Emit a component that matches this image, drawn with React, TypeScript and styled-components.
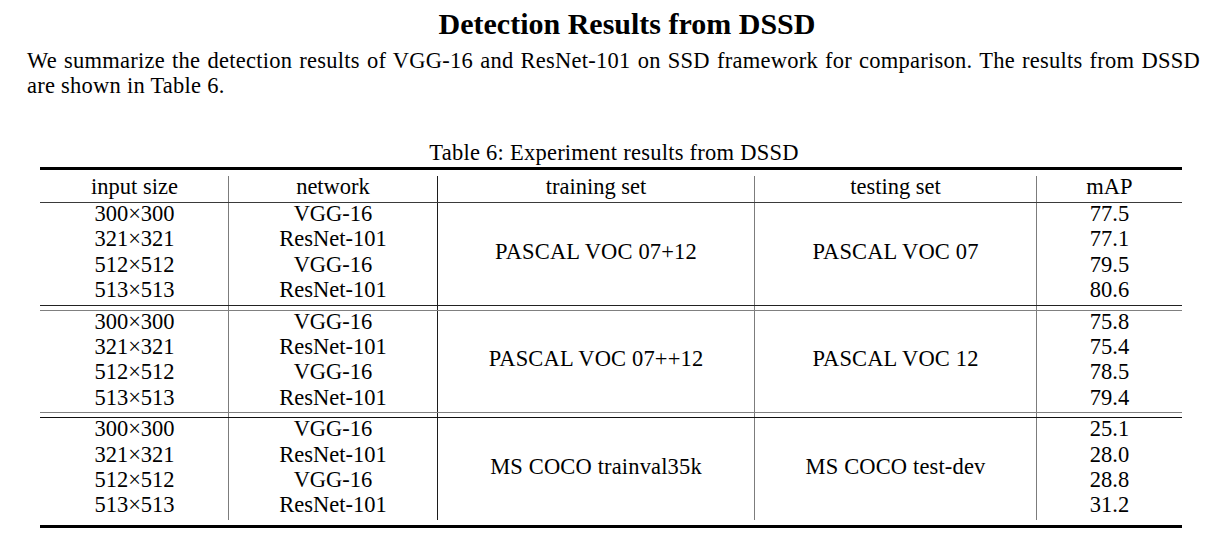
import React from "react";
import styled, { createGlobalStyle } from "styled-components";

const GlobalStyle = createGlobalStyle`
  html, body {
    margin: 0;
    padding: 0;
    background: #ffffff;
  }
  body {
    font-family: "Liberation Serif", "Times New Roman", serif;
    color: #000000;
  }
`;

const COLS = "188px 209px 317px 282px 146px";
const LINE_COLORS = ["transparent", "#7c7c7c", "#1c1c1c", "#7c7c7c", "#7c7c7c"];

const Page = styled.main`
  width: 1211px;
  padding-top: 6px;
  box-sizing: border-box;
`;

const Title = styled.h1`
  margin: 0;
  padding-left: 43px;
  font-size: 30px;
  line-height: 36px;
  font-weight: 700;
  text-align: center;
`;

const Paragraph = styled.p`
  margin: 6px 0 0 27px;
  width: 1173px;
  font-size: 22.5px;
  line-height: 25px;
  letter-spacing: 0.25px;
  text-align: justify;
`;

const Figure = styled.figure`
  margin: 42px 0 0 40px;
  width: 1142px;
`;

const Caption = styled.figcaption`
  font-size: 22.5px;
  line-height: 25px;
  letter-spacing: 0.25px;
  text-align: center;
  padding-left: 6px;
`;

const Rule = styled.div<{ $gap: number }>`
  margin-top: ${(p) => p.$gap}px;
  height: 3px;
  background: #000000;
`;

const HeaderGrid = styled.div`
  display: grid;
  grid-template-columns: ${COLS};
  padding-top: 6px;
  border-bottom: 1px solid #3a3a3a;
`;

const Cell = styled.div<{ $col: number; $row?: number; $span?: number }>`
  grid-column: ${(p) => p.$col};
  grid-row: ${(p) => (p.$row ? `${p.$row} / span ${p.$span ?? 1}` : "auto")};
  box-sizing: border-box;
  border-left: 1px solid ${(p) => LINE_COLORS[p.$col - 1]};
  font-size: 22.5px;
  line-height: 21px;
  text-align: center;
  white-space: nowrap;
`;

const HeadCell = styled(Cell)`
  height: 26px;
`;

const GroupGrid = styled.div`
  display: grid;
  grid-template-columns: ${COLS};
  grid-template-rows: repeat(4, 25.4px);
`;

const MergedCell = styled(Cell)`
  display: flex;
  align-items: center;
  justify-content: center;
  padding-bottom: 5px;
  letter-spacing: 0.15px;
`;

const SepGrid = styled.div<{ $top: string; $bottom: string }>`
  display: grid;
  grid-template-columns: ${COLS};
  height: 6px;
  box-sizing: border-box;
  border-top: 1px solid ${(p) => p.$top};
  border-bottom: 1px solid ${(p) => p.$bottom};
`;

const SepCell = styled.div<{ $col: number }>`
  border-left: 1px solid ${(p) => LINE_COLORS[p.$col - 1]};
`;

type Group = {
  train: string;
  test: string;
  maps: string[];
};

const SIZES = ["300×300", "321×321", "512×512", "513×513"];
const NETS = ["VGG-16", "ResNet-101", "VGG-16", "ResNet-101"];

const GROUPS: Group[] = [
  { train: "PASCAL VOC 07+12", test: "PASCAL VOC 07", maps: ["77.5", "77.1", "79.5", "80.6"] },
  { train: "PASCAL VOC 07++12", test: "PASCAL VOC 12", maps: ["75.8", "75.4", "78.5", "79.4"] },
  { train: "MS COCO trainval35k", test: "MS COCO test-dev", maps: ["25.1", "28.0", "28.8", "31.2"] },
];

const SEPS = [
  { top: "#222222", bottom: "#808080" },
  { top: "#808080", bottom: "#111111" },
];

const HEADERS = ["input size", "network", "training set", "testing set", "mAP"];

function Separator({ top, bottom }: { top: string; bottom: string }) {
  return (
    <SepGrid $top={top} $bottom={bottom}>
      {[1, 2, 3, 4, 5].map((c) => (
        <SepCell key={c} $col={c} />
      ))}
    </SepGrid>
  );
}

function GroupRows({ group }: { group: Group }) {
  return (
    <GroupGrid>
      {SIZES.map((s, i) => (
        <React.Fragment key={s}>
          <Cell $col={1} $row={i + 1}>{s}</Cell>
          <Cell $col={2} $row={i + 1}>{NETS[i]}</Cell>
          <Cell $col={5} $row={i + 1}>{group.maps[i]}</Cell>
        </React.Fragment>
      ))}
      <MergedCell $col={3} $row={1} $span={4}>{group.train}</MergedCell>
      <MergedCell $col={4} $row={1} $span={4}>{group.test}</MergedCell>
    </GroupGrid>
  );
}

export default function App() {
  return (
    <>
      <GlobalStyle />
      <Page>
        <Title>Detection Results from DSSD</Title>
        <Paragraph>
          We summarize the detection results of VGG-16 and ResNet-101 on SSD framework for comparison. The results from DSSD are shown in Table 6.
        </Paragraph>
        <Figure>
          <Caption>Table 6: Experiment results from DSSD</Caption>
          <Rule $gap={2} />
          <HeaderGrid>
            {HEADERS.map((h, i) => (
              <HeadCell key={h} $col={i + 1}>{h}</HeadCell>
            ))}
          </HeaderGrid>
          {GROUPS.map((g, i) => (
            <React.Fragment key={g.train}>
              <GroupRows group={g} />
              {i < SEPS.length && <Separator top={SEPS[i].top} bottom={SEPS[i].bottom} />}
            </React.Fragment>
          ))}
          <Rule $gap={5} />
        </Figure>
      </Page>
    </>
  );
}
